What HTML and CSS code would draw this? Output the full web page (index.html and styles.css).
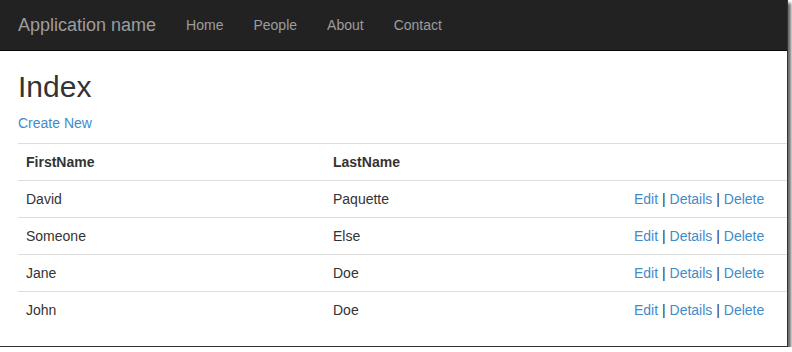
FILE: index.html
```html
<!DOCTYPE html>
<html lang="en">
<head>
    <meta charset="UTF-8">
    <meta name="viewport" content="width=device-width, initial-scale=1.0">
    <title>Index - My ASP.NET Application</title>
    <link rel="stylesheet" href="styles.css">
</head>
<body>

    <div class="shot">
        <div class="navbar">
            <a class="navbar-brand" href="#">Application name</a>
            <ul class="nav">
                <li><a href="#">Home</a></li>
                <li><a href="#">People</a></li>
                <li><a href="#">About</a></li>
                <li><a href="#">Contact</a></li>
            </ul>
        </div>

        <div class="container">
            <h2>Index</h2>
            <p><a href="#">Create New</a></p>
            <table class="table">
                <colgroup>
                    <col class="col-first">
                    <col class="col-last">
                    <col class="col-actions">
                </colgroup>
                <tr>
                    <th>FirstName</th>
                    <th>LastName</th>
                    <th></th>
                </tr>
                <tr>
                    <td>David</td>
                    <td>Paquette</td>
                    <td><a href="#">Edit</a> | <a href="#">Details</a> | <a href="#">Delete</a></td>
                </tr>
                <tr>
                    <td>Someone</td>
                    <td>Else</td>
                    <td><a href="#">Edit</a> | <a href="#">Details</a> | <a href="#">Delete</a></td>
                </tr>
                <tr>
                    <td>Jane</td>
                    <td>Doe</td>
                    <td><a href="#">Edit</a> | <a href="#">Details</a> | <a href="#">Delete</a></td>
                </tr>
                <tr>
                    <td>John</td>
                    <td>Doe</td>
                    <td><a href="#">Edit</a> | <a href="#">Details</a> | <a href="#">Delete</a></td>
                </tr>
            </table>
        </div>
    </div>

</body>
</html>
```

FILE: styles.css
```css
body {
    font-family: "Liberation Sans", Arial, sans-serif;
    font-size: 14px;
    line-height: 20px;
    color: #333;
    background-color: #fff;
    margin: 0;
    padding: 0;
}
a {
    color: #428bca;
    text-decoration: none;
}
.shot {
    width: 787px;
    height: 346px;
    overflow: hidden;
    background-color: #fff;
    border-right: 1px solid #333;
    border-bottom: 1px solid #333;
    box-shadow: 3px 3px 3px rgba(0, 0, 0, 0.6);
}
.navbar {
    display: flex;
    height: 50px;
    background-color: #222;
    border-bottom: 1px solid #080808;
    padding-left: 3px;
}
.navbar-brand {
    padding: 15px;
    font-size: 18px;
    line-height: 20px;
    color: #9d9d9d;
}
.nav {
    display: flex;
    list-style: none;
    margin: 0;
    padding: 0;
}
.nav a {
    display: block;
    padding: 15px;
    line-height: 20px;
    color: #9d9d9d;
}
.container {
    padding: 0 0 0 18px;
}
h2 {
    font-size: 30px;
    font-weight: 500;
    line-height: 33px;
    margin: 19px 0 10px;
}
p {
    margin: 0 0 10px;
}
.table {
    width: 920px;
    table-layout: fixed;
    border-collapse: collapse;
    border-spacing: 0;
}
.col-first {
    width: 307px;
}
.col-last {
    width: 301px;
}
.table th, .table td {
    padding: 8px;
    line-height: 20px;
    text-align: left;
    vertical-align: top;
    border-top: 1px solid #ddd;
}
.table th {
    font-weight: bold;
}
```
